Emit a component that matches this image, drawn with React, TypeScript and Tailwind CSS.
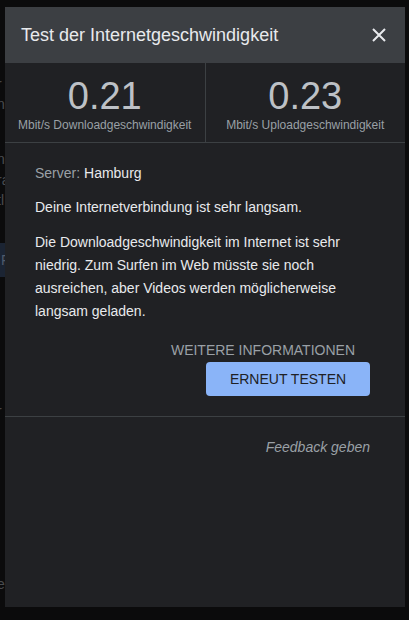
import React from 'react';

// Fragments of the page behind the dim overlay, cut off by the dialog
const BEHIND = [
  { top: 76, text: 'r' },
  { top: 96, text: 'n' },
  { top: 151, text: 'n' },
  { top: 172, text: 'ra' },
  { top: 192, text: 'tl' },
  { top: 403, text: 'r' },
  { top: 576, text: 'e' },
];

function Stat({ value, label }: { value: string; label: string }) {
  return (
    <div className="flex flex-1 flex-col items-center pt-[13px]">
      <span className="text-[38px] leading-[40px] font-light text-[#bdc1c6]">{value}</span>
      <span className="mt-[1px] text-[12px] leading-[16px] text-[#9aa0a6]">{label}</span>
    </div>
  );
}

export default function App() {
  return (
    <div className="relative h-[620px] w-[409px] overflow-hidden bg-[#0b0b0c]" style={{ fontFamily: '"Liberation Sans", Arial, sans-serif' }}>
      {BEHIND.map((b) => (
        <span key={b.top} className="absolute left-[-3px] text-[14px] leading-[16px] text-[#4a4c50]" style={{ top: b.top }}>
          {b.text}
        </span>
      ))}
      <div className="absolute left-0 top-[243px] flex h-[34px] w-[8px] items-center bg-[#1b2433] pl-[1px] text-[14px] text-[#4f5a6b]">F</div>

      <div className="absolute left-[5px] top-[7px] flex h-[600px] w-[400px] flex-col bg-[#202124]">
        <div className="flex h-[56px] items-center justify-between bg-[#3c3f43] pl-[16px] pr-[18px]">
          <h1 className="text-[18px] text-[#e8eaed]">Test der Internetgeschwindigkeit</h1>
          <svg width="16" height="16" viewBox="0 0 16 16" className="text-[#e8eaed]">
            <path d="M2 2 L14 14 M14 2 L2 14" stroke="currentColor" strokeWidth="2" />
          </svg>
        </div>

        <div className="flex h-[80px] border-b border-[#3c4043]">
          <Stat value="0.21" label="Mbit/s Downloadgeschwindigkeit" />
          <div className="w-px bg-[#3c4043]" />
          <Stat value="0.23" label="Mbit/s Uploadgeschwindigkeit" />
        </div>

        <div className="flex flex-col px-[30px] pt-[20px] text-[14px] text-[#e8eaed]">
          <p className="leading-[20px]">
            <span className="text-[#9aa0a6]">Server:</span> Hamburg
          </p>
          <p className="mt-[14px] leading-[20px]">Deine Internetverbindung ist sehr langsam.</p>
          <p className="mt-[14px] leading-[23px]">
            Die Downloadgeschwindigkeit im Internet ist sehr niedrig. Zum Surfen im Web müsste sie noch ausreichen, aber Videos werden möglicherweise langsam geladen.
          </p>
        </div>

        <div className="flex flex-col items-end pr-[35px] pt-[17px]">
          <span className="mr-[15px] text-[14px] leading-[20px] text-[#9aa0a6]">WEITERE INFORMATIONEN</span>
          <button className="mt-[2px] h-[34px] w-[164px] rounded-[4px] bg-[#8ab4f8] text-[14px] text-[#202124]">ERNEUT TESTEN</button>
        </div>

        <div className="mt-[20px] border-t border-[#3c4043] pr-[35px] pt-[18px] text-right">
          <span className="text-[14px] italic text-[#9aa0a6]">Feedback geben</span>
        </div>
      </div>
    </div>
  );
}
